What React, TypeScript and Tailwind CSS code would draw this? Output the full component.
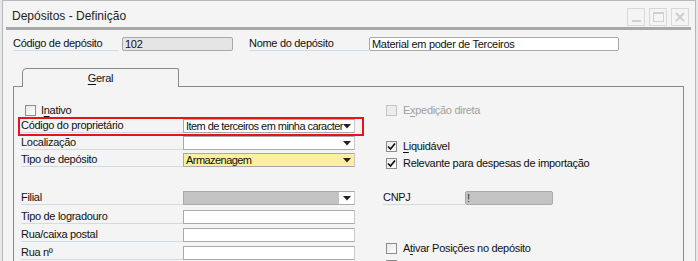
import React from 'react';

const font = { fontFamily: '"Liberation Sans", Arial, sans-serif' };

const Check = ({ checked = false, disabled = false }: { checked?: boolean; disabled?: boolean }) => (
  <div
    className={`w-[11px] h-[11px] border flex items-center justify-center shrink-0 ${
      disabled ? 'border-[#c4c4c4] bg-[#ececec]' : 'border-[#8c8c8c] bg-gradient-to-br from-[#e8e8e8] to-white'
    }`}
  >
    {checked && (
      <svg width="9" height="9" viewBox="0 0 9 9">
        <path d="M1 4.5 L3.5 7 L8 1.5" fill="none" stroke="#111" strokeWidth="1.7" />
      </svg>
    )}
  </div>
);

const Arrow = () => (
  <svg width="8" height="5" viewBox="0 0 8 5" className="shrink-0">
    <path d="M0 0 H8 L4 4.5 Z" fill="#222" />
  </svg>
);

const Label = ({ text, w }: { text: React.ReactNode; w: string }) => (
  <div className={`${w} h-full flex items-center border-b border-[#d2dae2] text-[#111] whitespace-nowrap`}>{text}</div>
);

const Select = ({ value = '', bg = 'bg-white' }: { value?: string; bg?: string }) => (
  <div className={`w-[172px] h-full border border-[#a9a9a9] border-r-[#c8c8c8] ${bg} flex items-center pl-[2px] pr-[3px] overflow-hidden`}>
    <span className="flex-1 overflow-hidden whitespace-nowrap text-[#111] leading-none tracking-[-0.55px]">{value}</span>
    <Arrow />
  </div>
);

const Input = ({ w = 'w-[172px]' }: { w?: string }) => (
  <div className={`${w} h-full border border-[#a9a9a9] border-r-[#c8c8c8] bg-white`} />
);

const U = ({ children }: { children: React.ReactNode }) => <span className="underline underline-offset-2">{children}</span>;

export default function App() {
  return (
    <div className="relative w-[698px] h-[261px] overflow-hidden bg-[#e8e8e8] text-[11px] tracking-[-0.3px]" style={font}>
      <div className="ml-[2px] w-[694px] h-[300px] border-l border-r border-t border-[#b8b8b8] bg-[#f4f4f4]">
        {/* Title bar */}
        <div className="h-[26px] flex items-center justify-between pl-[9px] pr-[6px]">
          <span className="text-[12px] tracking-normal text-[#222] pt-[4px]">Depósitos - Definição</span>
          <div className="flex gap-[4px] pt-[5px]">
            <div className="w-[18px] h-[18px] border border-[#d8d8d8] flex items-end justify-center pb-[3px]">
              <div className="w-[9px] h-[2px] bg-[#d0d0d0]" />
            </div>
            <div className="w-[18px] h-[18px] border border-[#d8d8d8] flex items-center justify-center">
              <div className="w-[11px] h-[10px] border border-[#cfcfcf] border-t-2" />
            </div>
            <div className="w-[18px] h-[18px] border border-[#d8d8d8] flex items-center justify-center">
              <svg width="10" height="10" viewBox="0 0 10 10">
                <path d="M1 1 L9 9 M9 1 L1 9" stroke="#cfcfcf" strokeWidth="2" />
              </svg>
            </div>
          </div>
        </div>
        <div className="ml-[3px] mr-[4px] h-[3px] bg-[#a8a8a8]" />

        {/* Header fields */}
        <div className="mt-[7px] h-[14px] flex items-center">
          <div className="ml-[10px] h-full"><Label w="w-[105px]" text="Código de depósito" /></div>
          <div className="ml-[4px] w-[111px] h-full border border-[#a9a9a9] rounded-[2px] bg-[#e5e5e5] flex items-center pl-[2px] text-[#111]">102</div>
          <div className="ml-[16px] h-full"><Label w="w-[120px]" text="Nome do depósito" /></div>
          <div className="w-[250px] h-full border border-[#a9a9a9] rounded-[2px] bg-white flex items-center pl-[2px] text-[#111]">Material em poder de Terceiros</div>
        </div>

        {/* Tab */}
        <div className="mt-[17px] ml-[19px] w-[157px] h-[19px] relative z-10 -mb-px border-t border-l border-r border-[#8a8a8a] rounded-tl-[5px] rounded-tr-[2px] bg-[#f4f4f4] flex items-center justify-center text-[#111]">
          <span><U>G</U>eral</span>
        </div>

        {/* Panel */}
        <div className="ml-[10px] w-[671px] h-[200px] border border-[#8a8a8a] flex">
          {/* Left column */}
          <div className="pl-[7px] w-[369px] flex flex-col">
            <div className="mt-[17px] h-[13px] flex items-center">
              <div className="ml-[4px]"><Check /></div>
              <span className="ml-[5px] text-[#111]">I<U>n</U>ativo</span>
            </div>
            <div className="mt-[2px] h-[14px] flex">
              <Label w="w-[162px]" text="Código do proprietário" />
              <Select value="Item de terceiros em minha caracter" />
            </div>
            <div className="mt-[3px] h-[14px] flex">
              <Label w="w-[162px]" text="Localização" />
              <Select />
            </div>
            <div className="mt-[3px] h-[14px] flex">
              <Label w="w-[162px]" text="Tipo de depósito" />
              <Select value="Armazenagem" bg="bg-[#fcef9f]" />
            </div>
            <div className="mt-[24px] h-[14px] flex">
              <Label w="w-[162px]" text="Filial" />
              <div className="w-[172px] h-full border border-[#a9a9a9] border-r-[#c8c8c8] bg-white flex items-center">
                <div className="w-[155px] h-full bg-[#c3c3c3]" />
                <div className="flex-1 flex justify-end pr-[3px]"><Arrow /></div>
              </div>
            </div>
            <div className="mt-[5px] h-[14px] flex">
              <Label w="w-[162px]" text="Tipo de logradouro" />
              <Input />
            </div>
            <div className="mt-[4px] h-[14px] flex">
              <Label w="w-[162px]" text="Rua/caixa postal" />
              <Input />
            </div>
            <div className="mt-[4px] h-[14px] flex">
              <Label w="w-[162px]" text="Rua nº" />
              <Input />
            </div>
          </div>

          {/* Right column */}
          <div className="flex flex-col">
            <div className="mt-[17px] h-[13px] flex items-center">
              <div className="ml-[3px]"><Check disabled /></div>
              <span className="ml-[6px] text-[#a0a0a0]">E<U>x</U>pedição direta</span>
            </div>
            <div className="mt-[23px] h-[13px] flex items-center">
              <div className="ml-[3px]"><Check checked /></div>
              <span className="ml-[6px] text-[#111]"><U>L</U>iquidável</span>
            </div>
            <div className="mt-[4px] h-[13px] flex items-center">
              <div className="ml-[3px]"><Check checked /></div>
              <span className="ml-[6px] text-[#111]">Relevante para despesas de importação</span>
            </div>
            <div className="mt-[21px] h-[14px] flex">
              <Label w="w-[82px]" text="CNPJ" />
              <div className="w-[88px] h-full border border-[#a9a9a9] rounded-[2px] bg-[#c3c3c3] flex items-center pl-[1px] text-[#333] leading-none">!</div>
            </div>
            <div className="mt-[37px] h-[13px] flex items-center">
              <div className="ml-[3px]"><Check /></div>
              <span className="ml-[6px] text-[#111]">A<U>t</U>ivar Posições no depósito</span>
            </div>
            <div className="mt-[4px] h-[13px] flex items-center">
              <div className="ml-[3px]"><Check /></div>
            </div>
          </div>
        </div>
      </div>

      {/* Red highlight annotation */}
      <div className="absolute left-[18px] top-[117px] w-[346px] h-[19px] border-2 border-[#e3141c] pointer-events-none" />
    </div>
  );
}
